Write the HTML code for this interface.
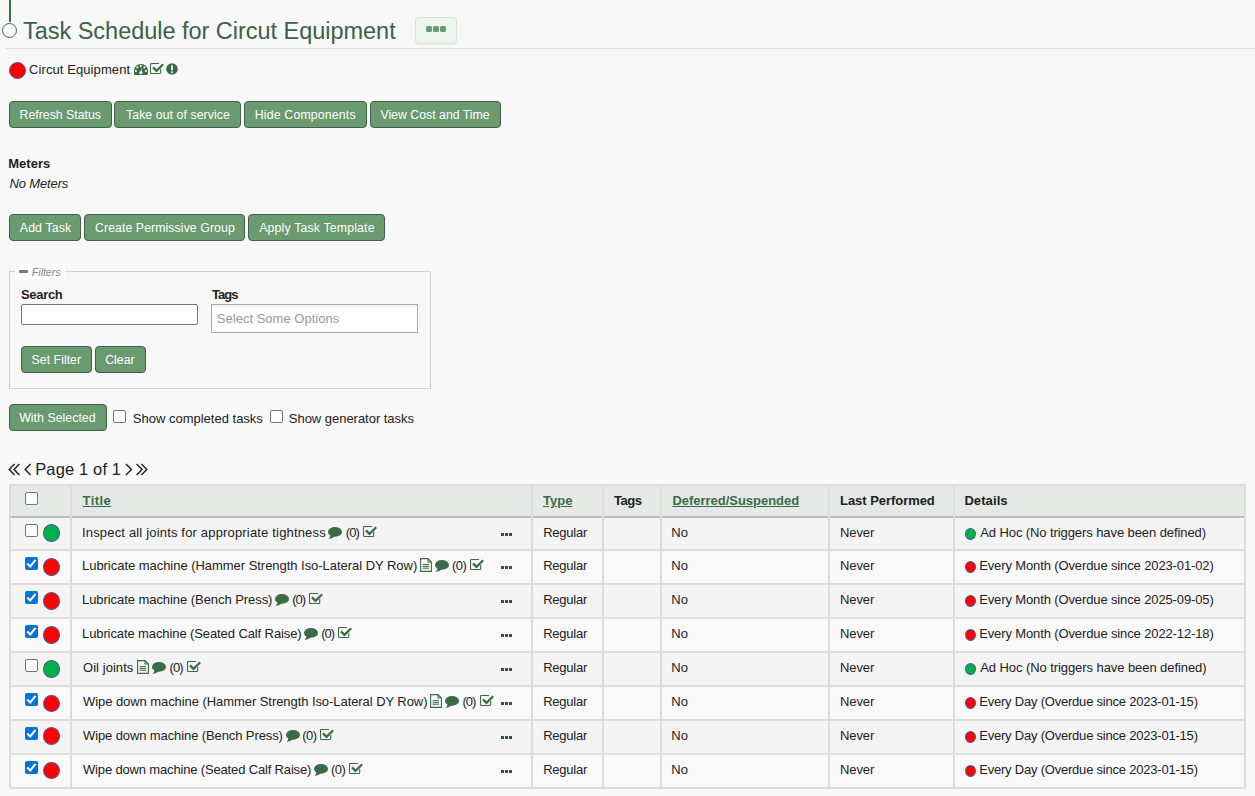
<!DOCTYPE html><html><head><meta charset="utf-8"><style>
*{box-sizing:border-box}
html,body{margin:0;padding:0}
body{width:1255px;height:796px;overflow:hidden;background:#f8f8f8;position:relative;font-family:"Liberation Sans",sans-serif;color:#222;font-size:13px}
.a{position:absolute;white-space:nowrap}
.btn{position:absolute;height:27px;background:#6a9a6f;border:1px solid #435f4a;border-radius:4px}
.bt{color:#fff}
.cb{position:absolute;width:13px;height:13px;border:1px solid #767676;border-radius:2px;background:#fff}
.cbc{position:absolute;width:13px;height:13px;border-radius:2px;background:#0075d8}
.dot{position:absolute;border-radius:50%;border:1px solid #4a5f9a}
.hl{position:absolute;background:#dcdcdc}
.lnk{color:#3e6b48;text-decoration:underline}
.ell{position:absolute;width:3px;height:3px;background:#2a5c34}
</style></head><body>
<div style="position:absolute;left:9px;top:0;width:2px;height:22px;background:#3d6b4a"></div>
<div style="position:absolute;left:2.2px;top:22.6px;width:15px;height:15px;border:1.2px solid #3f6452;border-radius:50%"></div>
<div class="a" id="title" style="left:23.00px;top:18.03px;font-size:23.5px;line-height:27px;letter-spacing:-0.027px;color:#3d5f49">Task Schedule for Circut Equipment</div>
<div style="position:absolute;left:415px;top:17px;width:42px;height:27px;background:#eef7ef;border:1px solid #d3e6d5;border-radius:4px;box-shadow:0 1px 1px rgba(0,0,0,0.06)"></div>
<div style="position:absolute;left:426px;top:26px;width:6px;height:6px;border-radius:1.5px;background:#6a9a70"></div>
<div style="position:absolute;left:433px;top:26px;width:6px;height:6px;border-radius:1.5px;background:#6a9a70"></div>
<div style="position:absolute;left:440px;top:26px;width:6px;height:6px;border-radius:1.5px;background:#6a9a70"></div>
<div style="position:absolute;left:6px;top:48px;width:1249px;height:1px;background:#dddddd"></div>
<div class="dot" style="left:9px;top:62px;width:17px;height:17px;background:#f00"></div>
<div class="a" id="eq" style="left:29.00px;top:61.95px;font-size:13px;line-height:15px;letter-spacing:0.090px">Circut Equipment</div>
<svg style="position:absolute;left:134px;top:64px" width="14" height="11" viewBox="0 0 14 11"><path d="M0.4 11 C0.1 9.5 0 8.2 0 7 C0 3.1 3.1 0 7 0 C10.9 0 14 3.1 14 7 C14 8.2 13.9 9.5 13.6 11 Z" fill="#3b6b46"/><g fill="#f8f8f8"><circle cx="1.9" cy="6.9" r="1.05"/><circle cx="3.4" cy="3.4" r="1.05"/><circle cx="6.8" cy="1.9" r="1.05"/><circle cx="10.4" cy="3.4" r="1.05"/><circle cx="11.9" cy="6.9" r="1.05"/><circle cx="6.8" cy="8.6" r="1.7"/><path d="M6.5 8.5 L7.8 3.9 L8.3 4 L7.3 8.7 Z"/></g></svg>
<svg style="position:absolute;left:150px;top:63px" width="14" height="12" viewBox="0 0 14 12"><path d="M9 0.5 H1.5 Q0.5 0.5 0.5 1.5 V9.5 Q0.5 10.5 1.5 10.5 H9.7 Q10.7 10.5 10.7 9.5 V6" fill="none" stroke="#3b6b46" stroke-width="1.1"/><path d="M3 4.4 L6.5 7.9 L13.2 1.3" fill="none" stroke="#3b6b46" stroke-width="2.2"/></svg>
<svg style="position:absolute;left:166.2px;top:63px" width="12" height="12" viewBox="0 0 12 12"><circle cx="6" cy="6" r="5.8" fill="#3b6b46"/><rect x="5.1" y="2.3" width="1.8" height="5" fill="#f8f8f8"/><rect x="5.1" y="8.4" width="1.8" height="1.7" fill="#f8f8f8"/></svg>
<div class="btn" style="left:9px;top:101px;width:103px"></div>
<div class="a" id="b1" style="left:19.60px;top:107.55px;font-size:12.3px;line-height:14px;letter-spacing:0.007px;color:#fff">Refresh Status</div>
<div class="btn" style="left:114px;top:101px;width:127px"></div>
<div class="a" id="b2" style="left:126.00px;top:107.55px;font-size:12.3px;line-height:14px;letter-spacing:0.075px;color:#fff">Take out of service</div>
<div class="btn" style="left:244px;top:101px;width:123px"></div>
<div class="a" id="b3" style="left:254.80px;top:107.55px;font-size:12.3px;line-height:14px;letter-spacing:0.167px;color:#fff">Hide Components</div>
<div class="btn" style="left:370px;top:101px;width:131px"></div>
<div class="a" id="b4" style="left:380.40px;top:107.55px;font-size:12.3px;line-height:14px;letter-spacing:0.011px;color:#fff">View Cost and Time</div>
<div class="a" id="meters" style="left:8.20px;top:155.95px;font-size:13px;line-height:15px;letter-spacing:0.036px;font-weight:bold">Meters</div>
<div class="a" id="nometers" style="left:9.40px;top:175.95px;font-size:13px;line-height:15px;letter-spacing:-0.124px;font-style:italic">No Meters</div>
<div class="btn" style="left:9px;top:214px;width:72px"></div>
<div class="a" id="b5" style="left:19.80px;top:220.54px;font-size:12.3px;line-height:14px;letter-spacing:0.141px;color:#fff">Add Task</div>
<div class="btn" style="left:84px;top:214px;width:161px"></div>
<div class="a" id="b6" style="left:95.00px;top:220.54px;font-size:12.3px;line-height:14px;letter-spacing:0.078px;color:#fff">Create Permissive Group</div>
<div class="btn" style="left:248px;top:214px;width:137px"></div>
<div class="a" id="b7" style="left:259.20px;top:220.54px;font-size:12.3px;line-height:14px;letter-spacing:0.165px;color:#fff">Apply Task Template</div>
<div style="position:absolute;left:9px;top:271px;width:422px;height:118px;border:1px solid #cfcfcf"></div>
<div style="position:absolute;left:15px;top:264px;width:50px;height:16px;background:#fdfdfd"></div>
<div style="position:absolute;left:19px;top:270.2px;width:9px;height:3px;background:#777;border-radius:1px"></div>
<div class="a" id="filters" style="left:31.80px;top:265.65px;font-size:11px;line-height:13px;letter-spacing:-0.165px;font-style:italic;color:#888">Filters</div>
<div class="a" id="search" style="left:21.00px;top:286.95px;font-size:13px;line-height:15px;letter-spacing:-0.324px;font-weight:bold">Search</div>
<div style="position:absolute;left:21px;top:304px;width:177px;height:21px;border:1px solid #767676;border-radius:2px;background:#fff"></div>
<div class="a" id="tags" style="left:212.00px;top:286.95px;font-size:13px;line-height:15px;letter-spacing:-0.930px;font-weight:bold">Tags</div>
<div style="position:absolute;left:211px;top:304px;width:207px;height:29px;border:1px solid #aaa;background:linear-gradient(#eee 0,#fff 4px)"></div>
<div class="a" id="sso" style="left:216.80px;top:310.95px;font-size:13px;line-height:15px;letter-spacing:0.020px;color:#999">Select Some Options</div>
<div class="btn" style="left:21px;top:346px;width:71px"></div>
<div class="a" id="b8" style="left:31.60px;top:352.55px;font-size:12.3px;line-height:14px;letter-spacing:0.030px;color:#fff">Set Filter</div>
<div class="btn" style="left:95px;top:346px;width:51px"></div>
<div class="a" id="b9" style="left:105.20px;top:352.55px;font-size:12.3px;line-height:14px;letter-spacing:0.023px;color:#fff">Clear</div>
<div class="btn" style="left:9px;top:404px;width:98px"></div>
<div class="a" id="b10" style="left:19.20px;top:410.55px;font-size:12.3px;line-height:14px;letter-spacing:0.045px;color:#fff">With Selected</div>
<div class="cb" style="left:113px;top:410px"></div>
<div class="a" id="sct" style="left:132.80px;top:410.95px;font-size:13px;line-height:15px;letter-spacing:0.000px">Show completed tasks</div>
<div class="cb" style="left:270px;top:410px"></div>
<div class="a" id="sgt" style="left:288.80px;top:410.95px;font-size:13px;line-height:15px;letter-spacing:-0.028px">Show generator tasks</div>
<svg style="position:absolute;left:0;top:456px" width="160" height="26" viewBox="0 456 160 26"><g fill="none" stroke="#222" stroke-width="1.45"><path d="M14.6 464.1 L9.2 469.5 L14.6 474.9 M19.4 464.1 L14 469.5 L19.4 474.9 M30.6 464.1 L25.2 469.5 L30.6 474.9 M126 464.1 L131.4 469.5 L126 474.9 M136.6 464.1 L142 469.5 L136.6 474.9 M141.4 464.1 L146.8 469.5 L141.4 474.9"/></g></svg>
<div class="a" id="page" style="left:35.20px;top:460.48px;font-size:16.5px;line-height:19px;letter-spacing:0.144px">Page 1 of 1</div>
<div style="position:absolute;left:9px;top:484px;width:1237px;height:305px;background:#dcdcdc"></div>
<div style="position:absolute;left:11px;top:486px;width:1233px;height:30px;background:#e4e9e5"></div>
<div style="position:absolute;left:11px;top:516px;width:1233px;height:2px;background:#bdbfbd"></div>
<div style="position:absolute;left:11px;top:518px;width:1233px;height:31px;background:#f4f4f4"></div>
<div style="position:absolute;left:11px;top:551px;width:1233px;height:32px;background:#f9f9f9"></div>
<div style="position:absolute;left:11px;top:585px;width:1233px;height:32px;background:#f4f4f4"></div>
<div style="position:absolute;left:11px;top:619px;width:1233px;height:32px;background:#f9f9f9"></div>
<div style="position:absolute;left:11px;top:653px;width:1233px;height:32px;background:#f4f4f4"></div>
<div style="position:absolute;left:11px;top:687px;width:1233px;height:32px;background:#f9f9f9"></div>
<div style="position:absolute;left:11px;top:721px;width:1233px;height:32px;background:#f4f4f4"></div>
<div style="position:absolute;left:11px;top:755px;width:1233px;height:32px;background:#f9f9f9"></div>
<div class="hl" style="left:70px;top:486px;width:2px;height:301px"></div>
<div class="hl" style="left:531px;top:486px;width:2px;height:301px"></div>
<div class="hl" style="left:602px;top:486px;width:2px;height:301px"></div>
<div class="hl" style="left:660px;top:486px;width:2px;height:301px"></div>
<div class="hl" style="left:828px;top:486px;width:2px;height:301px"></div>
<div class="hl" style="left:953px;top:486px;width:2px;height:301px"></div>
<div class="cb" style="left:25px;top:492px"></div>
<div class="a" id="hTitle" style="left:82.60px;top:492.95px;font-size:13px;line-height:15px;letter-spacing:0.405px;font-weight:bold;color:#3e6b48;text-decoration:underline">Title</div>
<div class="a" id="hType" style="left:543.00px;top:492.95px;font-size:13px;line-height:15px;letter-spacing:0.000px;font-weight:bold;color:#3e6b48;text-decoration:underline">Type</div>
<div class="a" id="hTags" style="left:614.00px;top:492.95px;font-size:13px;line-height:15px;letter-spacing:-0.480px;font-weight:bold">Tags</div>
<div class="a" id="hDef" style="left:672.40px;top:492.95px;font-size:13px;line-height:15px;letter-spacing:-0.021px;font-weight:bold;color:#3e6b48;text-decoration:underline">Deferred/Suspended</div>
<div class="a" id="hLast" style="left:840.00px;top:492.95px;font-size:13px;line-height:15px;letter-spacing:-0.042px;font-weight:bold">Last Performed</div>
<div class="a" id="hDet" style="left:964.40px;top:492.95px;font-size:13px;line-height:15px;letter-spacing:0.090px;font-weight:bold">Details</div>
<div class="cb" style="left:25px;top:524px"></div>
<div class="dot" style="left:43px;top:524.2px;width:17px;height:17.5px;background:#00b04a"></div>
<div class="a" id="r0t" style="left:82.00px;top:524.95px;font-size:13px;line-height:15px;letter-spacing:0.172px">Inspect all joints for appropriate tightness</div>
<svg style="position:absolute;left:328.4px;top:527px" width="14" height="12" viewBox="0 0 14 12"><ellipse cx="7" cy="4.9" rx="7" ry="4.9" fill="#3b6b46"/><path d="M2.6 7.6 Q2.4 10.3 0.6 11.9 Q4.6 11.3 6.8 9.5 Z" fill="#3b6b46"/></svg>
<div class="a" id="r0z" style="left:345.80px;top:524.95px;font-size:13px;line-height:15px;letter-spacing:-0.990px">(0)</div>
<svg style="position:absolute;left:362.8px;top:526px" width="14" height="12" viewBox="0 0 14 12"><path d="M9 0.5 H1.5 Q0.5 0.5 0.5 1.5 V9.5 Q0.5 10.5 1.5 10.5 H9.7 Q10.7 10.5 10.7 9.5 V6" fill="none" stroke="#3b6b46" stroke-width="1.1"/><path d="M3 4.4 L6.5 7.9 L13.2 1.3" fill="none" stroke="#3b6b46" stroke-width="2.2"/></svg>
<div class="ell" style="left:501px;top:533px"></div>
<div class="ell" style="left:505px;top:533px"></div>
<div class="ell" style="left:509px;top:533px"></div>
<div class="a" id="r0reg" style="left:543.20px;top:524.95px;font-size:13px;line-height:15px;letter-spacing:-0.240px">Regular</div>
<div class="a" id="r0no" style="left:671.20px;top:524.95px;font-size:13px;line-height:15px;letter-spacing:0.270px">No</div>
<div class="a" id="r0nev" style="left:840.00px;top:524.95px;font-size:13px;line-height:15px;letter-spacing:-0.113px">Never</div>
<div class="dot" style="left:965px;top:528px;width:11px;height:11.5px;background:#00b04a"></div>
<div class="a" id="r0det" style="left:980.20px;top:524.95px;font-size:13px;line-height:15px;letter-spacing:-0.088px">Ad Hoc (No triggers have been defined)</div>
<div class="cbc" style="left:25px;top:557px"><svg width="13" height="13" viewBox="0 0 13 13" style="position:absolute;left:0;top:0"><path d="M2.3 6.5 L5.2 9.5 L10.6 2.9" fill="none" stroke="#fff" stroke-width="2.1"/></svg></div>
<div class="dot" style="left:43px;top:558px;width:17px;height:17.5px;background:#ff0000"></div>
<div class="a" id="r1t" style="left:82.00px;top:557.95px;font-size:13px;line-height:15px;letter-spacing:-0.037px">Lubricate machine (Hammer Strength Iso-Lateral DY Row)</div>
<svg style="position:absolute;left:420.1px;top:558px" width="12" height="14" viewBox="0 0 12 14"><path d="M0.6 0.6 H8 L11.4 4 V13.4 H0.6 Z M8 0.6 V4 H11.4" fill="none" stroke="#3b6b46" stroke-width="1.1"/><path d="M2.6 6.6 H9 M2.6 8.4 H9 M2.6 10.2 H9" stroke="#3b6b46" stroke-width="1"/></svg>
<svg style="position:absolute;left:435.3px;top:560px" width="14" height="12" viewBox="0 0 14 12"><ellipse cx="7" cy="4.9" rx="7" ry="4.9" fill="#3b6b46"/><path d="M2.6 7.6 Q2.4 10.3 0.6 11.9 Q4.6 11.3 6.8 9.5 Z" fill="#3b6b46"/></svg>
<div class="a" id="r1z" style="left:452.00px;top:557.95px;font-size:13px;line-height:15px;letter-spacing:-0.540px">(0)</div>
<svg style="position:absolute;left:469.70000000000005px;top:559px" width="14" height="12" viewBox="0 0 14 12"><path d="M9 0.5 H1.5 Q0.5 0.5 0.5 1.5 V9.5 Q0.5 10.5 1.5 10.5 H9.7 Q10.7 10.5 10.7 9.5 V6" fill="none" stroke="#3b6b46" stroke-width="1.1"/><path d="M3 4.4 L6.5 7.9 L13.2 1.3" fill="none" stroke="#3b6b46" stroke-width="2.2"/></svg>
<div class="ell" style="left:501px;top:566px"></div>
<div class="ell" style="left:505px;top:566px"></div>
<div class="ell" style="left:509px;top:566px"></div>
<div class="a" id="r1reg" style="left:543.20px;top:557.95px;font-size:13px;line-height:15px;letter-spacing:-0.240px">Regular</div>
<div class="a" id="r1no" style="left:671.20px;top:557.95px;font-size:13px;line-height:15px;letter-spacing:0.270px">No</div>
<div class="a" id="r1nev" style="left:840.00px;top:557.95px;font-size:13px;line-height:15px;letter-spacing:-0.113px">Never</div>
<div class="dot" style="left:965px;top:561px;width:11px;height:11.5px;background:#ff0000"></div>
<div class="a" id="r1det" style="left:979.20px;top:557.95px;font-size:13px;line-height:15px;letter-spacing:-0.124px">Every Month (Overdue since 2023-01-02)</div>
<div class="cbc" style="left:25px;top:591px"><svg width="13" height="13" viewBox="0 0 13 13" style="position:absolute;left:0;top:0"><path d="M2.3 6.5 L5.2 9.5 L10.6 2.9" fill="none" stroke="#fff" stroke-width="2.1"/></svg></div>
<div class="dot" style="left:43px;top:592.2px;width:17px;height:17.5px;background:#ff0000"></div>
<div class="a" id="r2t" style="left:82.00px;top:591.95px;font-size:13px;line-height:15px;letter-spacing:-0.060px">Lubricate machine (Bench Press)</div>
<svg style="position:absolute;left:275px;top:594px" width="14" height="12" viewBox="0 0 14 12"><ellipse cx="7" cy="4.9" rx="7" ry="4.9" fill="#3b6b46"/><path d="M2.6 7.6 Q2.4 10.3 0.6 11.9 Q4.6 11.3 6.8 9.5 Z" fill="#3b6b46"/></svg>
<div class="a" id="r2z" style="left:292.20px;top:591.95px;font-size:13px;line-height:15px;letter-spacing:-0.990px">(0)</div>
<svg style="position:absolute;left:309.40000000000003px;top:593px" width="14" height="12" viewBox="0 0 14 12"><path d="M9 0.5 H1.5 Q0.5 0.5 0.5 1.5 V9.5 Q0.5 10.5 1.5 10.5 H9.7 Q10.7 10.5 10.7 9.5 V6" fill="none" stroke="#3b6b46" stroke-width="1.1"/><path d="M3 4.4 L6.5 7.9 L13.2 1.3" fill="none" stroke="#3b6b46" stroke-width="2.2"/></svg>
<div class="ell" style="left:501px;top:600px"></div>
<div class="ell" style="left:505px;top:600px"></div>
<div class="ell" style="left:509px;top:600px"></div>
<div class="a" id="r2reg" style="left:543.20px;top:591.95px;font-size:13px;line-height:15px;letter-spacing:-0.240px">Regular</div>
<div class="a" id="r2no" style="left:671.20px;top:591.95px;font-size:13px;line-height:15px;letter-spacing:0.270px">No</div>
<div class="a" id="r2nev" style="left:840.00px;top:591.95px;font-size:13px;line-height:15px;letter-spacing:-0.113px">Never</div>
<div class="dot" style="left:965px;top:595px;width:11px;height:11.5px;background:#ff0000"></div>
<div class="a" id="r2det" style="left:979.20px;top:591.95px;font-size:13px;line-height:15px;letter-spacing:-0.124px">Every Month (Overdue since 2025-09-05)</div>
<div class="cbc" style="left:25px;top:625px"><svg width="13" height="13" viewBox="0 0 13 13" style="position:absolute;left:0;top:0"><path d="M2.3 6.5 L5.2 9.5 L10.6 2.9" fill="none" stroke="#fff" stroke-width="2.1"/></svg></div>
<div class="dot" style="left:43px;top:626.1px;width:17px;height:17.5px;background:#ff0000"></div>
<div class="a" id="r3t" style="left:82.00px;top:625.95px;font-size:13px;line-height:15px;letter-spacing:-0.100px">Lubricate machine (Seated Calf Raise)</div>
<svg style="position:absolute;left:304px;top:628px" width="14" height="12" viewBox="0 0 14 12"><ellipse cx="7" cy="4.9" rx="7" ry="4.9" fill="#3b6b46"/><path d="M2.6 7.6 Q2.4 10.3 0.6 11.9 Q4.6 11.3 6.8 9.5 Z" fill="#3b6b46"/></svg>
<div class="a" id="r3z" style="left:321.20px;top:625.95px;font-size:13px;line-height:15px;letter-spacing:-0.990px">(0)</div>
<svg style="position:absolute;left:338.40000000000003px;top:627px" width="14" height="12" viewBox="0 0 14 12"><path d="M9 0.5 H1.5 Q0.5 0.5 0.5 1.5 V9.5 Q0.5 10.5 1.5 10.5 H9.7 Q10.7 10.5 10.7 9.5 V6" fill="none" stroke="#3b6b46" stroke-width="1.1"/><path d="M3 4.4 L6.5 7.9 L13.2 1.3" fill="none" stroke="#3b6b46" stroke-width="2.2"/></svg>
<div class="ell" style="left:501px;top:634px"></div>
<div class="ell" style="left:505px;top:634px"></div>
<div class="ell" style="left:509px;top:634px"></div>
<div class="a" id="r3reg" style="left:543.20px;top:625.95px;font-size:13px;line-height:15px;letter-spacing:-0.240px">Regular</div>
<div class="a" id="r3no" style="left:671.20px;top:625.95px;font-size:13px;line-height:15px;letter-spacing:0.270px">No</div>
<div class="a" id="r3nev" style="left:840.00px;top:625.95px;font-size:13px;line-height:15px;letter-spacing:-0.113px">Never</div>
<div class="dot" style="left:965px;top:629px;width:11px;height:11.5px;background:#ff0000"></div>
<div class="a" id="r3det" style="left:979.20px;top:625.95px;font-size:13px;line-height:15px;letter-spacing:-0.124px">Every Month (Overdue since 2022-12-18)</div>
<div class="cb" style="left:25px;top:659px"></div>
<div class="dot" style="left:43px;top:660.4px;width:17px;height:17.5px;background:#00b04a"></div>
<div class="a" id="r4t" style="left:83.00px;top:659.95px;font-size:13px;line-height:15px;letter-spacing:0.050px">Oil joints</div>
<svg style="position:absolute;left:137.0px;top:660px" width="12" height="14" viewBox="0 0 12 14"><path d="M0.6 0.6 H8 L11.4 4 V13.4 H0.6 Z M8 0.6 V4 H11.4" fill="none" stroke="#3b6b46" stroke-width="1.1"/><path d="M2.6 6.6 H9 M2.6 8.4 H9 M2.6 10.2 H9" stroke="#3b6b46" stroke-width="1"/></svg>
<svg style="position:absolute;left:152.2px;top:662px" width="14" height="12" viewBox="0 0 14 12"><ellipse cx="7" cy="4.9" rx="7" ry="4.9" fill="#3b6b46"/><path d="M2.6 7.6 Q2.4 10.3 0.6 11.9 Q4.6 11.3 6.8 9.5 Z" fill="#3b6b46"/></svg>
<div class="a" id="r4z" style="left:169.60px;top:659.95px;font-size:13px;line-height:15px;letter-spacing:-0.990px">(0)</div>
<svg style="position:absolute;left:186.6px;top:661px" width="14" height="12" viewBox="0 0 14 12"><path d="M9 0.5 H1.5 Q0.5 0.5 0.5 1.5 V9.5 Q0.5 10.5 1.5 10.5 H9.7 Q10.7 10.5 10.7 9.5 V6" fill="none" stroke="#3b6b46" stroke-width="1.1"/><path d="M3 4.4 L6.5 7.9 L13.2 1.3" fill="none" stroke="#3b6b46" stroke-width="2.2"/></svg>
<div class="ell" style="left:501px;top:668px"></div>
<div class="ell" style="left:505px;top:668px"></div>
<div class="ell" style="left:509px;top:668px"></div>
<div class="a" id="r4reg" style="left:543.20px;top:659.95px;font-size:13px;line-height:15px;letter-spacing:-0.240px">Regular</div>
<div class="a" id="r4no" style="left:671.20px;top:659.95px;font-size:13px;line-height:15px;letter-spacing:0.270px">No</div>
<div class="a" id="r4nev" style="left:840.00px;top:659.95px;font-size:13px;line-height:15px;letter-spacing:-0.113px">Never</div>
<div class="dot" style="left:965px;top:663px;width:11px;height:11.5px;background:#00b04a"></div>
<div class="a" id="r4det" style="left:980.20px;top:659.95px;font-size:13px;line-height:15px;letter-spacing:-0.073px">Ad Hoc (No triggers have been defined)</div>
<div class="cbc" style="left:25px;top:693px"><svg width="13" height="13" viewBox="0 0 13 13" style="position:absolute;left:0;top:0"><path d="M2.3 6.5 L5.2 9.5 L10.6 2.9" fill="none" stroke="#fff" stroke-width="2.1"/></svg></div>
<div class="dot" style="left:43px;top:694.7px;width:17px;height:17.5px;background:#ff0000"></div>
<div class="a" id="r5t" style="left:83.00px;top:693.95px;font-size:13px;line-height:15px;letter-spacing:-0.066px">Wipe down machine (Hammer Strength Iso-Lateral DY Row)</div>
<svg style="position:absolute;left:430.2px;top:694px" width="12" height="14" viewBox="0 0 12 14"><path d="M0.6 0.6 H8 L11.4 4 V13.4 H0.6 Z M8 0.6 V4 H11.4" fill="none" stroke="#3b6b46" stroke-width="1.1"/><path d="M2.6 6.6 H9 M2.6 8.4 H9 M2.6 10.2 H9" stroke="#3b6b46" stroke-width="1"/></svg>
<svg style="position:absolute;left:445.4px;top:696px" width="14" height="12" viewBox="0 0 14 12"><ellipse cx="7" cy="4.9" rx="7" ry="4.9" fill="#3b6b46"/><path d="M2.6 7.6 Q2.4 10.3 0.6 11.9 Q4.6 11.3 6.8 9.5 Z" fill="#3b6b46"/></svg>
<div class="a" id="r5z" style="left:462.40px;top:693.95px;font-size:13px;line-height:15px;letter-spacing:-0.990px">(0)</div>
<svg style="position:absolute;left:479.8px;top:695px" width="14" height="12" viewBox="0 0 14 12"><path d="M9 0.5 H1.5 Q0.5 0.5 0.5 1.5 V9.5 Q0.5 10.5 1.5 10.5 H9.7 Q10.7 10.5 10.7 9.5 V6" fill="none" stroke="#3b6b46" stroke-width="1.1"/><path d="M3 4.4 L6.5 7.9 L13.2 1.3" fill="none" stroke="#3b6b46" stroke-width="2.2"/></svg>
<div class="ell" style="left:501px;top:702px"></div>
<div class="ell" style="left:505px;top:702px"></div>
<div class="ell" style="left:509px;top:702px"></div>
<div class="a" id="r5reg" style="left:543.20px;top:693.95px;font-size:13px;line-height:15px;letter-spacing:-0.240px">Regular</div>
<div class="a" id="r5no" style="left:671.20px;top:693.95px;font-size:13px;line-height:15px;letter-spacing:0.270px">No</div>
<div class="a" id="r5nev" style="left:840.00px;top:693.95px;font-size:13px;line-height:15px;letter-spacing:-0.113px">Never</div>
<div class="dot" style="left:965px;top:697px;width:11px;height:11.5px;background:#ff0000"></div>
<div class="a" id="r5det" style="left:979.20px;top:693.95px;font-size:13px;line-height:15px;letter-spacing:-0.211px">Every Day (Overdue since 2023-01-15)</div>
<div class="cbc" style="left:25px;top:727px"><svg width="13" height="13" viewBox="0 0 13 13" style="position:absolute;left:0;top:0"><path d="M2.3 6.5 L5.2 9.5 L10.6 2.9" fill="none" stroke="#fff" stroke-width="2.1"/></svg></div>
<div class="dot" style="left:43px;top:727.4px;width:17px;height:17.5px;background:#ff0000"></div>
<div class="a" id="r6t" style="left:83.00px;top:727.95px;font-size:13px;line-height:15px;letter-spacing:-0.105px">Wipe down machine (Bench Press)</div>
<svg style="position:absolute;left:285.5px;top:730px" width="14" height="12" viewBox="0 0 14 12"><ellipse cx="7" cy="4.9" rx="7" ry="4.9" fill="#3b6b46"/><path d="M2.6 7.6 Q2.4 10.3 0.6 11.9 Q4.6 11.3 6.8 9.5 Z" fill="#3b6b46"/></svg>
<div class="a" id="r6z" style="left:302.20px;top:727.95px;font-size:13px;line-height:15px;letter-spacing:-0.540px">(0)</div>
<svg style="position:absolute;left:319.90000000000003px;top:729px" width="14" height="12" viewBox="0 0 14 12"><path d="M9 0.5 H1.5 Q0.5 0.5 0.5 1.5 V9.5 Q0.5 10.5 1.5 10.5 H9.7 Q10.7 10.5 10.7 9.5 V6" fill="none" stroke="#3b6b46" stroke-width="1.1"/><path d="M3 4.4 L6.5 7.9 L13.2 1.3" fill="none" stroke="#3b6b46" stroke-width="2.2"/></svg>
<div class="ell" style="left:501px;top:736px"></div>
<div class="ell" style="left:505px;top:736px"></div>
<div class="ell" style="left:509px;top:736px"></div>
<div class="a" id="r6reg" style="left:543.20px;top:727.95px;font-size:13px;line-height:15px;letter-spacing:-0.240px">Regular</div>
<div class="a" id="r6no" style="left:671.20px;top:727.95px;font-size:13px;line-height:15px;letter-spacing:0.270px">No</div>
<div class="a" id="r6nev" style="left:840.00px;top:727.95px;font-size:13px;line-height:15px;letter-spacing:-0.113px">Never</div>
<div class="dot" style="left:965px;top:731px;width:11px;height:11.5px;background:#ff0000"></div>
<div class="a" id="r6det" style="left:979.20px;top:727.95px;font-size:13px;line-height:15px;letter-spacing:-0.211px">Every Day (Overdue since 2023-01-15)</div>
<div class="cbc" style="left:25px;top:761px"><svg width="13" height="13" viewBox="0 0 13 13" style="position:absolute;left:0;top:0"><path d="M2.3 6.5 L5.2 9.5 L10.6 2.9" fill="none" stroke="#fff" stroke-width="2.1"/></svg></div>
<div class="dot" style="left:43px;top:761.7px;width:17px;height:17.5px;background:#ff0000"></div>
<div class="a" id="r7t" style="left:83.00px;top:761.95px;font-size:13px;line-height:15px;letter-spacing:-0.160px">Wipe down machine (Seated Calf Raise)</div>
<svg style="position:absolute;left:314.2px;top:764px" width="14" height="12" viewBox="0 0 14 12"><ellipse cx="7" cy="4.9" rx="7" ry="4.9" fill="#3b6b46"/><path d="M2.6 7.6 Q2.4 10.3 0.6 11.9 Q4.6 11.3 6.8 9.5 Z" fill="#3b6b46"/></svg>
<div class="a" id="r7z" style="left:331.00px;top:761.95px;font-size:13px;line-height:15px;letter-spacing:-0.540px">(0)</div>
<svg style="position:absolute;left:348.6px;top:763px" width="14" height="12" viewBox="0 0 14 12"><path d="M9 0.5 H1.5 Q0.5 0.5 0.5 1.5 V9.5 Q0.5 10.5 1.5 10.5 H9.7 Q10.7 10.5 10.7 9.5 V6" fill="none" stroke="#3b6b46" stroke-width="1.1"/><path d="M3 4.4 L6.5 7.9 L13.2 1.3" fill="none" stroke="#3b6b46" stroke-width="2.2"/></svg>
<div class="ell" style="left:501px;top:770px"></div>
<div class="ell" style="left:505px;top:770px"></div>
<div class="ell" style="left:509px;top:770px"></div>
<div class="a" id="r7reg" style="left:543.20px;top:761.95px;font-size:13px;line-height:15px;letter-spacing:-0.240px">Regular</div>
<div class="a" id="r7no" style="left:671.20px;top:761.95px;font-size:13px;line-height:15px;letter-spacing:0.270px">No</div>
<div class="a" id="r7nev" style="left:840.00px;top:761.95px;font-size:13px;line-height:15px;letter-spacing:-0.113px">Never</div>
<div class="dot" style="left:965px;top:765px;width:11px;height:11.5px;background:#ff0000"></div>
<div class="a" id="r7det" style="left:979.20px;top:761.95px;font-size:13px;line-height:15px;letter-spacing:-0.211px">Every Day (Overdue since 2023-01-15)</div>
</body></html>
